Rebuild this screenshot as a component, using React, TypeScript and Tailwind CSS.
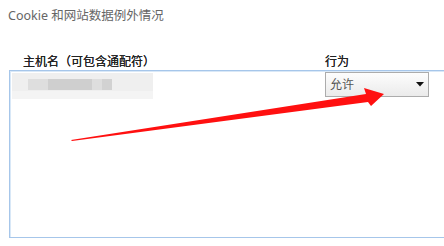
import React from 'react'

const FONT = 'font-["Noto_Sans","Noto_Sans_CJK_SC",sans-serif]'

function BlurredHost() {
  // the host name in the screenshot is pixelated / blurred out
  return (
    <div className="relative ml-[2px] mt-[2px] h-[26px] w-[141px] bg-[#efefef] blur-[0.6px]">
      <div className="absolute left-[16px] top-[6px] h-[11px] w-[84px] bg-[#dedede]" />
      <div className="absolute left-[36px] top-[6px] h-[11px] w-[44px] bg-[#cfcfcf]" />
      <div className="absolute left-[90px] top-[6px] h-[11px] w-[10px] bg-[#d2d2d2]" />
      <div className="absolute left-[0px] top-[18px] h-[8px] w-[141px] bg-[#f4f4f4]" />
    </div>
  )
}

function Dropdown() {
  return (
    <div className="ml-[172px] mt-[1px] flex h-[25px] w-[104px] items-center justify-between border border-[#acacac] bg-gradient-to-b from-[#fdfdfd] to-[#ebebeb] pl-[4px] pr-[4px]">
      <span className="text-[12px] leading-[16px] text-[#555]">允许</span>
      <svg width="8" height="5" viewBox="0 0 8 5">
        <path d="M0 0 H8 L4 4.5 Z" fill="#111" />
      </svg>
    </div>
  )
}

export default function App() {
  return (
    <div className={`relative h-[246px] w-[444px] overflow-hidden bg-white ${FONT}`}>
      <div className="pl-2 pt-2 text-[12.5px] leading-[16px] text-[#666]">
        Cookie 和网站数据例外情况
      </div>

      <div className="mt-[30px] flex text-[12px] leading-[16px] text-[#222]">
        <div className="w-[325px] pl-[23px] [text-shadow:0_0_0.3px_#222]">主机名（可包含通配符）</div>
        <div className="[text-shadow:0_0_0.3px_#222]">行为</div>
      </div>

      <div className="ml-[9px] h-[168px] w-[460px] border border-[#a6c6ea] shadow-[inset_1px_1px_0_#d9e8f7]">
        <div className="flex items-start">
          <BlurredHost />
          <Dropdown />
        </div>
      </div>

      {/* red annotation arrow */}
      <svg className="pointer-events-none absolute inset-0" width="444" height="246" viewBox="0 0 444 246">
        <polygon
          points="71,140 366,94 364,88 384,94 371,106 368,102 72,141"
          fill="#ff1010"
        />
      </svg>
    </div>
  )
}
